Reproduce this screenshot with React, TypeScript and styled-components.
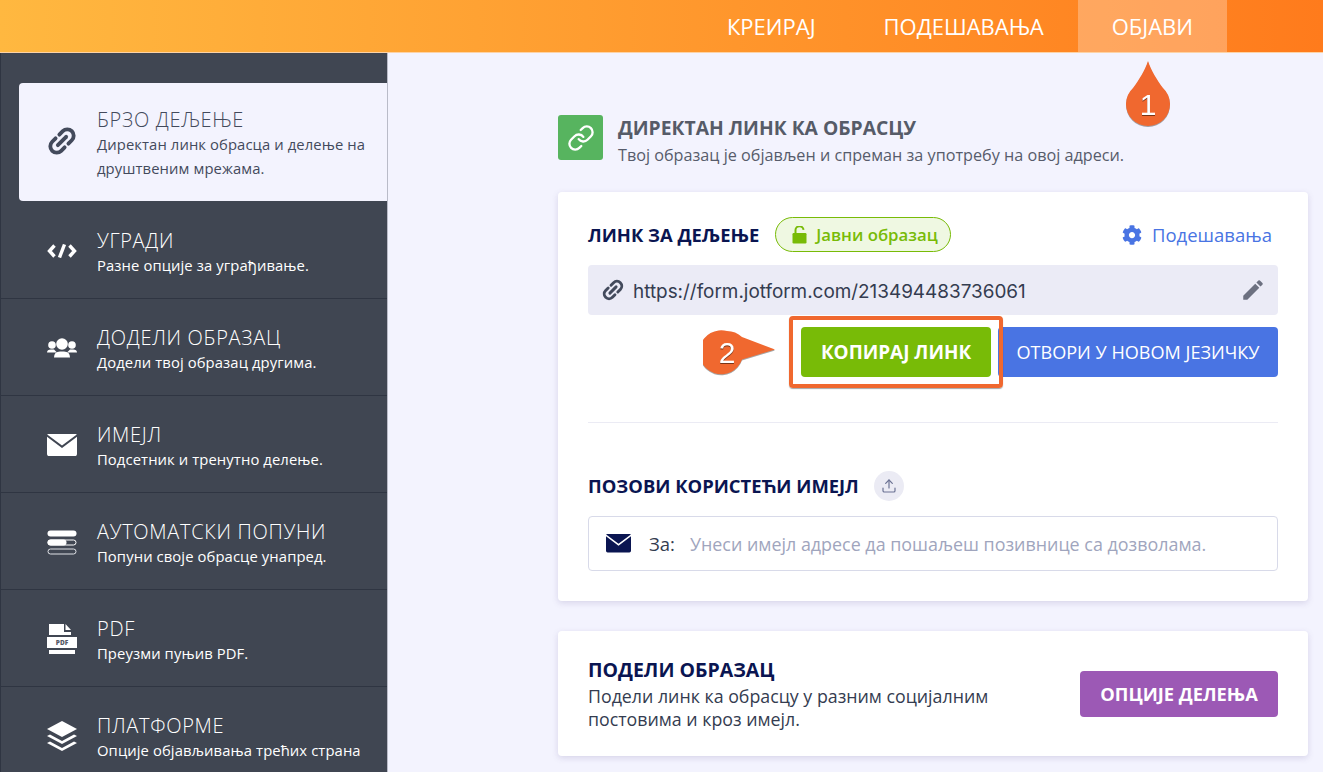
import styled, { createGlobalStyle } from 'styled-components';
import type { ReactNode } from 'react';
import { FaCog } from 'react-icons/fa';
import { MdEdit } from 'react-icons/md';
import { Link as LinkIcon, Upload } from 'lucide-react';

const GlobalStyle = createGlobalStyle`
  html, body {
    margin: 0;
    padding: 0;
    background: #f3f3fe;
    font-family: "Open Sans", "Noto Sans", sans-serif;
    overflow: hidden;
  }
  * { box-sizing: border-box; }
`;

const ChainIcon = ({ size = 32 }: { size?: number }) => (
  <svg width={size} height={size} viewBox="0 0 30 30" fill="none" stroke="currentColor" strokeWidth="3.6" strokeLinecap="round">
    <g transform="rotate(-45 15 15)">
      <path d="M12.500 9H8a6 6 0 0 0 0 12h4.500" />
      <path d="M17.500 9H22a6 6 0 0 1 0 12h-4.500" />
      <path d="M9.500 15h11" />
    </g>
  </svg>
);

const CodeIcon = () => (
  <svg width="30" height="14" viewBox="0 0 30 14" fill="none" stroke="#fff" strokeWidth="3.400">
    <path d="M7.500 1.500 2.500 7l5 5.500" />
    <path d="M12.500 13.500 17.500 .5" />
    <path d="M22.500 1.500l5 5.500-5 5.500" />
  </svg>
);

const UsersIcon = () => (
  <svg width="30" height="20" viewBox="0 0 30 20" fill="#fff">
    <circle cx="5" cy="7" r="3.800" />
    <circle cx="25" cy="7" r="3.800" />
    <path d="M0 14.500a4 3 0 0 1 4-3h3l3 3Z" />
    <path d="M30 14.500a4 3 0 0 0-4-3h-3l-3 3Z" />
    <circle cx="15" cy="6" r="5.800" />
    <path d="M7 19.500q0-6 6-6h4q6 0 6 6Z" />
  </svg>
);

const MailIcon = ({ size = 30, color = '#fff' }: { size?: number; color?: string }) => (
  <svg width={size} height={size * 0.74} viewBox="0 0 30 22">
    <path d="M1 0h28a1 1 0 0 1 .8.4L15 11.500.2.4A1 1 0 0 1 1 0Z" fill={color} />
    <path d="M0 2.600 15 14 30 2.600V20a2 2 0 0 1-2 2H2a2 2 0 0 1-2-2Z" fill={color} />
  </svg>
);

const AutofillIcon = () => (
  <svg width="30" height="25" viewBox="0 0 30 25">
    <rect x="0.500" y="0.500" width="29" height="6" rx="3" fill="#fff" />
    <rect x="1" y="10" width="28" height="5" rx="2.500" fill="#404652" stroke="#fff" />
    <rect x="0.500" y="9.500" width="19" height="6" rx="3" fill="#fff" />
    <rect x="1" y="19" width="28" height="5" rx="2.500" fill="none" stroke="#dfe1e6" />
  </svg>
);

const PdfIcon = () => (
  <svg width="30" height="30" viewBox="0 0 30 30">
    <path d="M2 0h15v8h7v3H2Z" fill="#fff" />
    <path d="M18.500 0 24 6h-5.500Z" fill="#fff" />
    <rect x="0" y="13" width="30" height="11" fill="#fff" />
    <rect x="2" y="26" width="26" height="4" fill="#fff" />
    <text x="15" y="21" textAnchor="middle" fontSize="6.500" fontWeight="800" fill="#555a66" fontFamily="Open Sans, sans-serif">PDF</text>
  </svg>
);

const LayersIcon = () => (
  <svg width="30" height="30" viewBox="0 0 30 30" fill="#fff">
    <path d="M15 0 30 8 15 16 0 8Z" />
    <path d="M0 15 3 13.500 15 20 27 13.500 30 15 15 23Z" />
    <path d="M0 22 3 20.500 15 27 27 20.500 30 22 15 30Z" />
  </svg>
);

const LockOpenIcon = () => (
  <svg width="15" height="18" viewBox="0 0 15 18">
    <path d="M3.500 7.500V4.500a4 4 0 0 1 8-.6" fill="none" stroke="#78bb07" strokeWidth="2" />
    <rect x="0.500" y="7" width="14" height="10.500" rx="1.200" fill="#78bb07" />
  </svg>
);

const items: { title: string; text: ReactNode; icon: ReactNode }[] = [
  { title: 'БРЗО ДЕЉЕЊЕ', text: 'Директан линк обрасца и делење на друштвеним мрежама.', icon: <ChainIcon /> },
  { title: 'УГРАДИ', text: 'Разне опције за уграђивање.', icon: <CodeIcon /> },
  { title: 'ДОДЕЛИ ОБРАЗАЦ', text: 'Додели твој образац другима.', icon: <UsersIcon /> },
  { title: 'ИМЕЈЛ', text: 'Подсетник и тренутно делење.', icon: <MailIcon /> },
  { title: 'АУТОМАТСКИ ПОПУНИ', text: 'Попуни своје обрасце унапред.', icon: <AutofillIcon /> },
  { title: 'PDF', text: 'Преузми пуњив PDF.', icon: <PdfIcon /> },
  { title: 'ПЛАТФОРМЕ', text: 'Опције објављивања трећих страна', icon: <LayersIcon /> },
];

export default function App() {
  return (
    <Page>
      <GlobalStyle />
      <TopBar>
        <NavItem>КРЕИРАЈ</NavItem>
        <NavItem>ПОДЕШАВАЊА</NavItem>
        <NavItem $active>ОБЈАВИ</NavItem>
      </TopBar>
      <Body>
        <Sidebar>
          {items.map((item, i) => (
            <SideItem key={item.title} $active={i === 0}>
              <SideIcon $active={i === 0}>{item.icon}</SideIcon>
              <div>
                <SideTitle>{item.title}</SideTitle>
                <SideText>{item.text}</SideText>
              </div>
            </SideItem>
          ))}
        </Sidebar>
        <Main>
          <Heading>
            <HeadingIcon><LinkIcon size={28} strokeWidth={2} /></HeadingIcon>
            <div>
              <HeadingTitle>ДИРЕКТАН ЛИНК КА ОБРАСЦУ</HeadingTitle>
              <HeadingText>Твој образац је објављен и спреман за употребу на овој адреси.</HeadingText>
            </div>
          </Heading>
          <LinkCard>
            <CardRow>
              <CardTitle>ЛИНК ЗА ДЕЉЕЊЕ</CardTitle>
              <PublicBadge><LockOpenIcon />Јавни образац</PublicBadge>
              <SettingsLink><FaCog size={20} />Подешавања</SettingsLink>
            </CardRow>
            <UrlField>
              <UrlChain><ChainIcon size={24} /></UrlChain>
              <UrlText>https://form.jotform.com/213494483736061</UrlText>
              <MdEdit size={26} color="#6c7080" />
            </UrlField>
            <ButtonRow>
              <Highlight>
                <Button $color="#78bb07" $width={190} $size={18.9} $bold>КОПИРАЈ ЛИНК</Button>
              </Highlight>
              <Button $color="#4974e3" $width={280} $size={18.1}>ОТВОРИ У НОВОМ ЈЕЗИЧКУ</Button>
              <Callout2 width="74" height="48" viewBox="0 0 74 48">
                <path d="M24 2a22 22 0 0 1 15 6l33 12.500-33 10A22 22 0 1 1 24 2Z" fill="#f0682f" />
                <CalloutNumber x="24" y="34">2</CalloutNumber>
              </Callout2>
            </ButtonRow>
            <Divider />
            <InviteRow>
              <CardTitle>ПОЗОВИ КОРИСТЕЋИ ИМЕЈЛ</CardTitle>
              <ShareCircle><Upload size={16} strokeWidth={1.8} /></ShareCircle>
            </InviteRow>
            <MailField>
              <MailIcon size={25} color="#0a1551" />
              <MailLabel>За:</MailLabel>
              <MailPlaceholder>Унеси имејл адресе да пошаљеш позивнице са дозволама.</MailPlaceholder>
            </MailField>
          </LinkCard>
          <ShareCard>
            <div>
              <ShareTitle>ПОДЕЛИ ОБРАЗАЦ</ShareTitle>
              <ShareText>Подели линк ка обрасцу у разним социјалним постовима и кроз имејл.</ShareText>
            </div>
            <Button $color="#9c59b5" $width={198} $height={46} $size={18.3} $bold>ОПЦИЈЕ ДЕЛЕЊА</Button>
          </ShareCard>
        </Main>
      </Body>
      <Callout1 width="48" height="70" viewBox="0 0 48 70">
        <path d="M23 1c3 9 9 19 15 27a22 22 0 1 1-30 0C14 20 20 10 23 1Z" fill="#f0682f" />
        <CalloutNumber x="23" y="55">1</CalloutNumber>
      </Callout1>
    </Page>
  );
}

const Page = styled.div`
  position: relative;
  width: 1323px;
  height: 772px;
  overflow: hidden;
  background: #f3f3fe;
`;

const TopBar = styled.header`
  display: flex;
  justify-content: flex-end;
  height: 53px;
  padding-right: 96px;
  background: linear-gradient(90deg, #ffb840 0%, #ff7b1c 100%);
  border-bottom: 1px solid #fdd3a6;
`;

const NavItem = styled.div<{ $active?: boolean }>`
  display: flex;
  align-items: center;
  padding: 0 34px;
  color: #fff;
  font-size: 22px;
  background: ${p => (p.$active ? 'rgba(255, 255, 255, 0.28)' : 'transparent')};
`;

const Body = styled.div`
  display: flex;
  height: 719px;
`;

const Sidebar = styled.aside`
  width: 388px;
  flex-shrink: 0;
  padding-top: 30px;
  background: #404652;
  border-left: 1px solid #2f3542;
  border-right: 1px solid #b9bbc8;
`;

const SideItem = styled.div<{ $active?: boolean }>`
  display: flex;
  align-items: flex-start;
  height: ${p => (p.$active ? '118px' : '97px')};
  margin-left: ${p => (p.$active ? '18px' : '0')};
  margin-bottom: ${p => (p.$active ? '1px' : '0')};
  padding: ${p => (p.$active ? '24px 14px 0 28px' : '26px 14px 0 46px')};
  color: ${p => (p.$active ? '#434a5c' : '#fff')};
  background: ${p => (p.$active ? '#f3f3fe' : 'transparent')};
  border-radius: ${p => (p.$active ? '4px 0 0 4px' : '0')};
  border-bottom: ${p => (p.$active ? 'none' : '1px solid #2f3542')};
`;

const SideIcon = styled.div<{ $active?: boolean }>`
  display: flex;
  align-items: center;
  justify-content: center;
  width: 30px;
  height: 40px;
  margin-right: 20px;
  margin-top: ${p => (p.$active ? '14px' : '3px')};
  flex-shrink: 0;

  svg {
    flex-shrink: 0;
  }
`;

const SideTitle = styled.div`
  font-size: 20px;
  font-weight: 300;
  line-height: 25px;
  letter-spacing: 0.7px;
`;

const SideText = styled.div`
  font-size: 14.800px;
  line-height: 24px;
  letter-spacing: 0.1px;
`;

const Main = styled.main`
  width: 750px;
  margin-left: 170px;
  padding-top: 62px;
`;

const Heading = styled.div`
  display: flex;
  gap: 15px;
  height: 77px;
`;

const HeadingIcon = styled.div`
  display: flex;
  align-items: center;
  justify-content: center;
  width: 45px;
  height: 45px;
  color: #fff;
  background: #57b45f;
  border-radius: 3px;
`;

const HeadingTitle = styled.div`
  margin-top: 1px;
  color: #565b68;
  font-size: 19.300px;
  font-weight: 700;
  line-height: 24px;
`;

const HeadingText = styled.div`
  margin-top: 3px;
  color: #575c6b;
  font-size: 16.200px;
  line-height: 24px;
`;

const Card = styled.section`
  background: #fff;
  border-radius: 4px;
  box-shadow: 0 2px 6px rgba(86, 70, 139, 0.18);
`;

const LinkCard = styled(Card)`
  height: 409px;
  padding: 26px 30px 0;
`;

const CardRow = styled.div`
  display: flex;
  align-items: center;
  height: 33px;
`;

const CardTitle = styled.div`
  color: #0a1551;
  font-size: 18.400px;
  font-weight: 700;
  line-height: 24px;
`;

const PublicBadge = styled.div`
  display: flex;
  align-items: center;
  gap: 9px;
  height: 35px;
  margin-left: 16px;
  padding: 0 12px 0 16px;
  color: #78bb07;
  font-size: 16.800px;
  font-weight: 600;
  background: #eff8e2;
  border: 1px solid #78bb07;
  border-radius: 18px;
`;

const SettingsLink = styled.div`
  display: flex;
  align-items: center;
  gap: 10px;
  margin-left: auto;
  margin-right: 6px;
  color: #4974e3;
  font-size: 18.500px;
`;

const UrlField = styled.div`
  display: flex;
  align-items: center;
  height: 50px;
  margin-top: 14px;
  padding: 0 12px 0 13px;
  background: #ebebf6;
  border-radius: 4px;
`;

const UrlChain = styled.span`
  display: flex;
  color: #434a5c;
`;

const UrlText = styled.div`
  flex: 1;
  margin-top: 2px;
  margin-left: 8px;
  color: #343c50;
  font-family: Inter, "Open Sans", sans-serif;
  font-size: 18.900px;
`;

const ButtonRow = styled.div`
  position: relative;
  display: flex;
  justify-content: flex-end;
  align-items: center;
  height: 50px;
  margin-top: 12px;
  gap: 7px;
`;

const Highlight = styled.div`
  position: relative;
  &::after {
    content: '';
    position: absolute;
    inset: -11px -12px;
    border: 4px solid #f0682f;
    border-radius: 4px;
    box-shadow: 0 1px 1px rgba(0, 0, 0, 0.35);
  }
`;

const Button = styled.div<{ $color: string; $width: number; $height?: number; $size: number; $bold?: boolean }>`
  display: flex;
  align-items: center;
  justify-content: center;
  width: ${p => p.$width}px;
  height: ${p => p.$height ?? 50}px;
  color: #fff;
  font-size: ${p => p.$size}px;
  font-weight: ${p => (p.$bold ? 700 : 400)};
  white-space: nowrap;
  background: ${p => p.$color};
  border-radius: 4px;
`;

const Divider = styled.div`
  height: 1px;
  margin-top: 45px;
  background: #ebebf4;
`;

const InviteRow = styled.div`
  display: flex;
  align-items: center;
  gap: 15px;
  height: 30px;
  margin-top: 48px;
`;

const ShareCircle = styled.div`
  display: flex;
  align-items: center;
  justify-content: center;
  width: 30px;
  height: 30px;
  color: #6c7394;
  background: #ebebf4;
  border-radius: 50%;
`;

const MailField = styled.div`
  display: flex;
  align-items: center;
  height: 55px;
  margin-top: 15px;
  padding: 0 17px;
  border: 1px solid #d8dae9;
  border-radius: 4px;
`;

const MailLabel = styled.span`
  margin-left: 18px;
  color: #343c50;
  font-size: 18.500px;
`;

const MailPlaceholder = styled.span`
  margin-left: 15px;
  color: #a0a5bd;
  font-size: 17.900px;
  white-space: nowrap;
`;

const ShareCard = styled(Card)`
  display: flex;
  align-items: center;
  justify-content: space-between;
  height: 125px;
  margin-top: 30px;
  padding: 0 30px;
`;

const ShareTitle = styled.div`
  color: #0a1551;
  font-size: 19.500px;
  font-weight: 700;
  line-height: 26px;
`;

const ShareText = styled.div`
  width: 430px;
  margin-top: 2px;
  color: #343c50;
  font-size: 17.800px;
  line-height: 23px;
`;

const Callout1 = styled.svg`
  position: absolute;
  left: 1125px;
  top: 60px;
  filter: drop-shadow(0 1px 0 rgba(0, 0, 0, 0.35));
`;

const Callout2 = styled.svg`
  position: absolute;
  left: 115px;
  top: 2px;
  filter: drop-shadow(0 1px 0 rgba(0, 0, 0, 0.35));
`;

const CalloutNumber = styled.text`
  fill: #fff;
  font-family: "Liberation Sans", sans-serif;
  font-size: 30px;
  text-anchor: middle;
  filter: drop-shadow(0 1px 0 rgba(0, 0, 0, 0.5));
`;
